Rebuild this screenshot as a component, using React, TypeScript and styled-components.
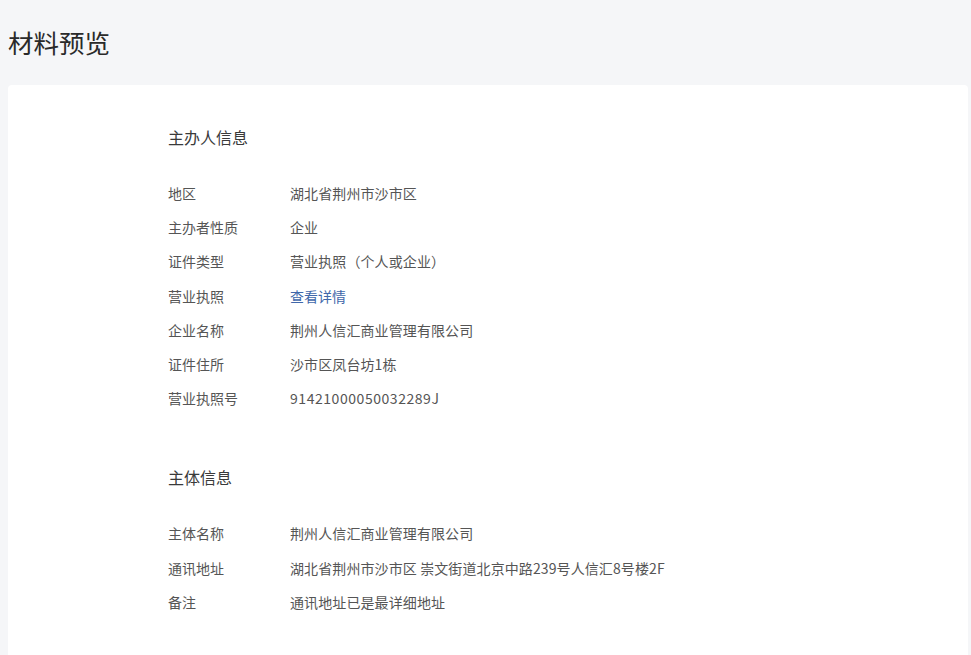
import React from "react";
import styled, { createGlobalStyle } from "styled-components";

const GlobalStyle = createGlobalStyle`
  html, body {
    margin: 0;
    padding: 0;
    background: #f5f6f8;
    font-family: "Noto Sans CJK SC", "Liberation Sans", sans-serif;
    color: #333;
  }
`;

const Page = styled.div`
  display: flex;
  flex-direction: column;
  min-height: 655px;
`;

const Header = styled.div`
  height: 85px;
  display: flex;
  align-items: center;
  padding-left: 8px;
`;

const Title = styled.h1`
  margin: 0 0 2px 0;
  font-size: 25.5px;
  font-weight: 400;
  color: #2a2a2a;
  line-height: 1;
`;

const Card = styled.div`
  margin: 0 3px 0 8px;
  background: #fff;
  border-radius: 4px;
  padding: 40px 0 80px 160px;
  display: flex;
  flex-direction: column;
  gap: 50px;
`;

const Section = styled.section`
  display: flex;
  flex-direction: column;
`;

const SectionTitle = styled.h2`
  margin: 0 0 27px 0;
  font-size: 16px;
  font-weight: 400;
  line-height: 24px;
  color: #3a3a3a;
`;

const Row = styled.div`
  display: grid;
  grid-template-columns: 122px 1fr;
  height: 34.2px;
  align-items: center;
  font-size: 14px;
`;

const Label = styled.span`
  color: #555;
`;

const Value = styled.span<{ $wide?: boolean }>`
  color: #555;
  letter-spacing: ${(p) => (p.$wide ? "0.55px" : "0.1px")};
`;

const Link = styled.a`
  color: #4067aa;
  text-decoration: none;
  cursor: pointer;
`;

type Item = { label: string; value: string; link?: boolean; wide?: boolean };

const sections: { title: string; items: Item[] }[] = [
  {
    title: "主办人信息",
    items: [
      { label: "地区", value: "湖北省荆州市沙市区" },
      { label: "主办者性质", value: "企业" },
      { label: "证件类型", value: "营业执照（个人或企业）" },
      { label: "营业执照", value: "查看详情", link: true },
      { label: "企业名称", value: "荆州人信汇商业管理有限公司" },
      { label: "证件住所", value: "沙市区凤台坊1栋" },
      { label: "营业执照号", value: "91421000050032289J", wide: true },
    ],
  },
  {
    title: "主体信息",
    items: [
      { label: "主体名称", value: "荆州人信汇商业管理有限公司" },
      { label: "通讯地址", value: "湖北省荆州市沙市区 崇文街道北京中路239号人信汇8号楼2F" },
      { label: "备注", value: "通讯地址已是最详细地址" },
    ],
  },
];

export default function App() {
  return (
    <>
      <GlobalStyle />
      <Page>
        <Header>
          <Title>材料预览</Title>
        </Header>
        <Card>
          {sections.map((s) => (
            <Section key={s.title}>
              <SectionTitle>{s.title}</SectionTitle>
              {s.items.map((it) => (
                <Row key={it.label}>
                  <Label>{it.label}</Label>
                  {it.link ? (
                    <Link>{it.value}</Link>
                  ) : (
                    <Value $wide={it.wide}>{it.value}</Value>
                  )}
                </Row>
              ))}
            </Section>
          ))}
        </Card>
      </Page>
    </>
  );
}
